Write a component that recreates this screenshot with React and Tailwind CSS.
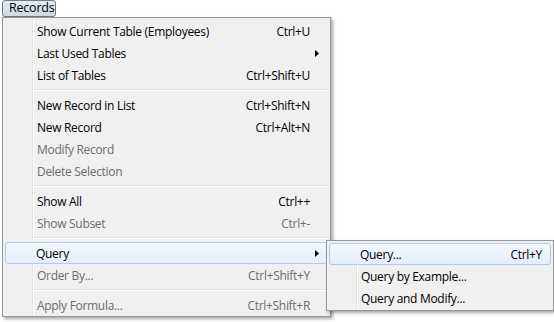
import React from "react";

const font = { fontFamily: '"Open Sans", "Noto Sans", sans-serif' };

function Arrow() {
  return (
    <svg width="4" height="7" viewBox="0 0 4 7" className="block">
      <path d="M0 0 L4 3.5 L0 7 Z" fill="#000" />
    </svg>
  );
}

function Item({ label, shortcut, disabled, arrow, highlight }) {
  const color = disabled ? "text-[#6d6d6d]" : "text-black";
  if (highlight) {
    return (
      <div className="flex h-[22px] items-center rounded-[3px] border border-[#aecbf0] bg-gradient-to-b from-[#f4f8fd] to-[#e6eefa]">
        <div className="w-[27px] self-stretch" />
        <div className={`flex flex-1 items-center pl-[3px] pr-[8px] pt-[1px] ${color}`}>
          <span className="flex-1 whitespace-nowrap">{label}</span>
          {shortcut && <span className="whitespace-nowrap">{shortcut}</span>}
          {arrow && <Arrow />}
        </div>
      </div>
    );
  }
  return (
    <div className="flex h-[22px] items-center">
      <div className="w-[27px] self-stretch" />
      <div className="self-stretch w-[2px] border-l border-l-[#e2e3e3] border-r border-r-white" />
      <div className={`flex flex-1 items-center pl-[3px] pr-[18px] pt-[1px] ${color}`}>
        <span className="flex-1 whitespace-nowrap">{label}</span>
        {shortcut && <span className="whitespace-nowrap">{shortcut}</span>}
        {arrow && (
          <span className="-mr-[9px] ml-[4px]">
            <Arrow />
          </span>
        )}
      </div>
    </div>
  );
}

function Sep() {
  return (
    <div className="flex h-[8px]">
      <div className="w-[27px]" />
      <div className="w-[2px] border-l border-l-[#e2e3e3] border-r border-r-white" />
      <div className="flex flex-1 flex-col justify-center">
        <div className="h-[1px] bg-[#e0e0e0]" />
        <div className="h-[1px] bg-white" />
      </div>
    </div>
  );
}

export default function App() {
  return (
    <div className="relative h-[322px] w-[554px] overflow-hidden bg-white text-[12px] leading-none tracking-[-0.3px]" style={font}>
      <div className="ml-[2px] flex h-[17px] w-[54px] items-center rounded-[3px] border border-[#6f7a86] bg-gradient-to-b from-[#e4eaf1] to-[#cfd9e4] pl-[6px] text-[12.5px] tracking-[-0.2px] text-black">
        Records
      </div>
      <div className="ml-[2px] w-[329px] border border-[#979797] bg-[#f0f0f0] p-[2px] pb-0 shadow-[2px_2px_3px_rgba(0,0,0,0.35)]">
        <Item label="Show Current Table (Employees)" shortcut="Ctrl+U" />
        <Item label="Last Used Tables" arrow />
        <Item label="List of Tables" shortcut="Ctrl+Shift+U" />
        <Sep />
        <Item label="New Record in List" shortcut="Ctrl+Shift+N" />
        <Item label="New Record" shortcut="Ctrl+Alt+N" />
        <Item label="Modify Record" disabled />
        <Item label="Delete Selection" disabled />
        <Sep />
        <Item label="Show All" shortcut="Ctrl++" />
        <Item label="Show Subset" shortcut="Ctrl+-" disabled />
        <Sep />
        <Item label="Query" arrow highlight />
        <Item label="Order By..." shortcut="Ctrl+Shift+Y" disabled />
        <Sep />
        <Item label="Apply Formula..." shortcut="Ctrl+Shift+R" disabled />
      </div>
      <div className="absolute left-[326px] top-[240px] w-[228px] border border-[#979797] bg-[#f0f0f0] p-[2px] pb-[1px] shadow-[2px_2px_3px_rgba(0,0,0,0.35)]">
        <Item label="Query..." shortcut="Ctrl+Y" highlight />
        <Item label="Query by Example..." />
        <Item label="Query and Modify..." />
      </div>
    </div>
  );
}
